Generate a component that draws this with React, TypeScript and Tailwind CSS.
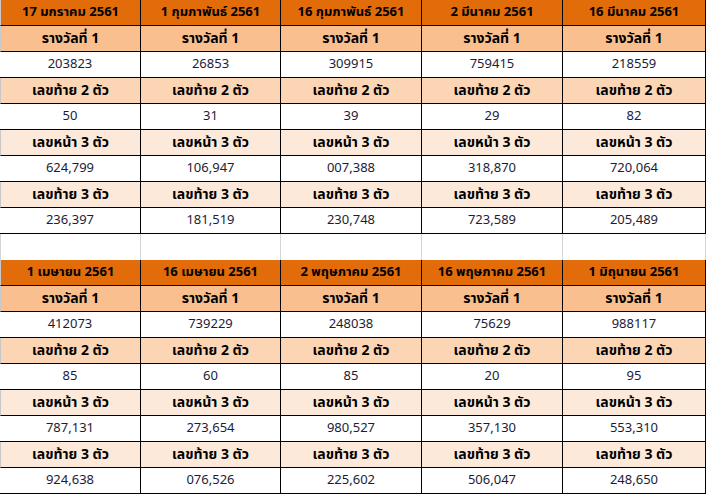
type Draw = {
  date: string
  first: string
  last2: string
  front3: string
  last3: string
}

const BLOCKS: Draw[][] = [
  [
    { date: '17 มกราคม 2561', first: '203823', last2: '50', front3: '624,799', last3: '236,397' },
    { date: '1 กุมภาพันธ์ 2561', first: '26853', last2: '31', front3: '106,947', last3: '181,519' },
    { date: '16 กุมภาพันธ์ 2561', first: '309915', last2: '39', front3: '007,388', last3: '230,748' },
    { date: '2 มีนาคม 2561', first: '759415', last2: '29', front3: '318,870', last3: '723,589' },
    { date: '16 มีนาคม 2561', first: '218559', last2: '82', front3: '720,064', last3: '205,489' },
  ],
  [
    { date: '1 เมษายน 2561', first: '412073', last2: '85', front3: '787,131', last3: '924,638' },
    { date: '16 เมษายน 2561', first: '739229', last2: '60', front3: '273,654', last3: '076,526' },
    { date: '2 พฤษภาคม 2561', first: '248038', last2: '85', front3: '980,527', last3: '225,602' },
    { date: '16 พฤษภาคม 2561', first: '75629', last2: '20', front3: '357,130', last3: '506,047' },
    { date: '1 มิถุนายน 2561', first: '988117', last2: '95', front3: '553,310', last3: '248,650' },
  ],
]

const ROWS: { label: string; key: keyof Draw; fill: string }[] = [
  { label: 'รางวัลที่ 1', key: 'first', fill: 'bg-[#fabf8f]' },
  { label: 'เลขท้าย 2 ตัว', key: 'last2', fill: 'bg-[#fcd5b4]' },
  { label: 'เลขหน้า 3 ตัว', key: 'front3', fill: 'bg-[#fde9d9]' },
  { label: 'เลขท้าย 3 ตัว', key: 'last3', fill: 'bg-[#fde9d9]' },
]

const CELL =
  'flex h-[26px] items-center justify-center border-b border-r border-black first:border-l first:border-l-[#c8c8c8]'

function Block({ draws }: { draws: Draw[] }) {
  return (
    <div className="grid grid-cols-[141px_140px_141px_141px_143px]">
      {draws.map((d) => (
        <div key={d.date} className={`${CELL} bg-[#e26b0a] text-[13px] font-bold text-black`}>
          {d.date}
        </div>
      ))}
      {ROWS.map((row) => (
        <div key={row.key} className="contents">
          {draws.map((d) => (
            <div key={d.date} className={`${CELL} ${row.fill} text-[14px] font-bold text-black`}>
              {row.label}
            </div>
          ))}
          {draws.map((d) => (
            <div key={d.date} className={`${CELL} bg-white text-[13px] text-[#1c1c38]`}>
              {d[row.key]}
            </div>
          ))}
        </div>
      ))}
    </div>
  )
}

export default function App() {
  return (
    <div
      className="h-[496px] w-[706px] overflow-hidden bg-white leading-none"
      style={{ fontFamily: 'Tahoma, "Noto Sans Thai", "Noto Sans", "DejaVu Sans", sans-serif' }}
    >
      <Block draws={BLOCKS[0]} />
      <div className="grid h-[26px] grid-cols-[141px_140px_141px_141px_143px]">
        {[0, 1, 2, 3, 4].map((i) => (
          <div key={i} className="border-r border-[#d4d4d4] first:border-l" />
        ))}
      </div>
      <Block draws={BLOCKS[1]} />
    </div>
  )
}
